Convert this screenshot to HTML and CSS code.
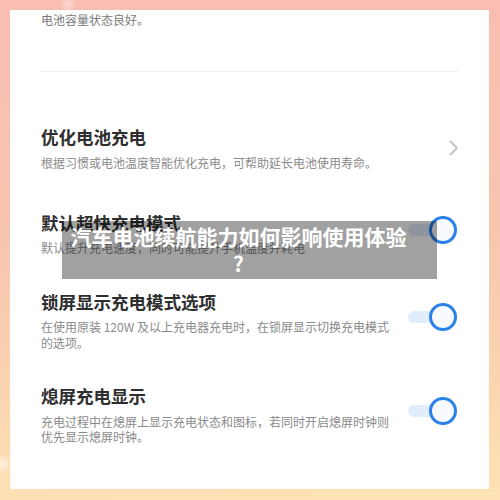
FILE: index.html
```html
<!DOCTYPE html>
<html lang="zh">
<head>
<meta charset="utf-8">
<link rel="stylesheet" href="styles.css">
</head>
<body>
<div class="panel">
  <p class="lead">电池容量状态良好。</p>
  <div class="divider"></div>
  <div class="list">
    <div class="item item-first">
      <div class="text">
        <div class="title">优化电池充电</div>
        <div class="sub">根据习惯或电池温度智能优化充电，可帮助延长电池使用寿命。</div>
      </div>
      <svg class="chev" width="10" height="16" viewBox="0 0 10 16"><path d="M1.5 1.5 L8 8 L1.5 14.5" fill="none" stroke="#c4c4c4" stroke-width="1.8" stroke-linecap="round" stroke-linejoin="round"/></svg>
    </div>
    <div class="item">
      <div class="text">
        <div class="title">默认超快充电模式</div>
        <div class="sub">默认提升充电速度，同时可能提升手机温度并耗电</div>
      </div>
      <div class="toggle"><span class="knob"></span></div>
    </div>
    <div class="item">
      <div class="text">
        <div class="title">锁屏显示充电模式选项</div>
        <div class="sub">在使用原装 120W 及以上充电器充电时，在锁屏显示切换充电模式的选项。</div>
      </div>
      <div class="toggle"><span class="knob"></span></div>
    </div>
    <div class="item">
      <div class="text">
        <div class="title">熄屏充电显示</div>
        <div class="sub">充电过程中在熄屏上显示充电状态和图标，若同时开启熄屏时钟则优先显示熄屏时钟。</div>
      </div>
      <div class="toggle"><span class="knob"></span></div>
    </div>
  </div>
  <div class="overlay">汽车电池续航能力如何影响使用体验<br>?</div>
</div>
</body>
</html>
```

FILE: styles.css
```css
html, body {
  margin: 0;
  padding: 0;
}
body {
  width: 500px;
  height: 500px;
  box-sizing: border-box;
  padding: 10px 11px 11px 10px;
  background:
    radial-gradient(circle at 68px 4px, rgba(255,255,255,0.45) 0, rgba(255,255,255,0) 9px),
    radial-gradient(circle at 2px 464px, rgba(255,255,255,0.6) 0, rgba(255,255,255,0) 10px),
    linear-gradient(178deg, #f9bdb1 0%, #f7c4ae 45%, #fbd7b1 80%, #fde3b4 100%);
  font-family: "Noto Sans CJK SC", "Noto Sans", sans-serif;
  overflow: hidden;
}
.panel {
  position: relative;
  background: #fff;
  height: 479px;
  box-sizing: border-box;
  padding: 1.5px 32px 0 31px;
  overflow: hidden;
}
.lead {
  margin: 0;
  font-size: 12px;
  line-height: 15px;
  color: #7a7a7a;
}
.divider {
  height: 1px;
  background: #f1f1f1;
  margin: 44.5px -2px 0 -1px;
}
.list {
  display: flex;
  flex-direction: column;
  gap: 34px;
  margin-top: 53px;
}
.item {
  display: flex;
  align-items: center;
  gap: 16px;
}
.item-first {
  margin-bottom: 6.5px;
}
.text {
  flex: 1;
  min-width: 0;
}
.title {
  font-size: 17.5px;
  line-height: 24px;
  font-weight: 700;
  color: #2e2e2e;
}
.sub {
  margin-top: 5.5px;
  font-size: 12px;
  line-height: 15.5px;
  color: #8a8a8a;
  max-width: 360px;
}
.chev {
  margin-right: -2px;
  flex: none;
}
.toggle {
  position: relative;
  width: 49px;
  height: 28px;
  flex: none;
  margin-top: -6px;
}
.toggle::before {
  content: "";
  position: absolute;
  left: 0;
  top: 8px;
  width: 44px;
  height: 12px;
  border-radius: 6px;
  background: #e2edfc;
}
.knob {
  position: absolute;
  right: 0;
  top: 0;
  width: 28px;
  height: 28px;
  box-sizing: border-box;
  border-radius: 50%;
  border: 3.5px solid #2b80ea;
  background: #f8fafd;
}
.overlay {
  position: absolute;
  left: 52px;
  top: 211px;
  width: 375px;
  box-sizing: border-box;
  padding: 2px 30px 2px 8px;
  background: rgba(0, 0, 0, 0.37);
  color: #fff;
  font-size: 21px;
  line-height: 27px;
  font-weight: 700;
  text-align: center;
  white-space: nowrap;
}
```
